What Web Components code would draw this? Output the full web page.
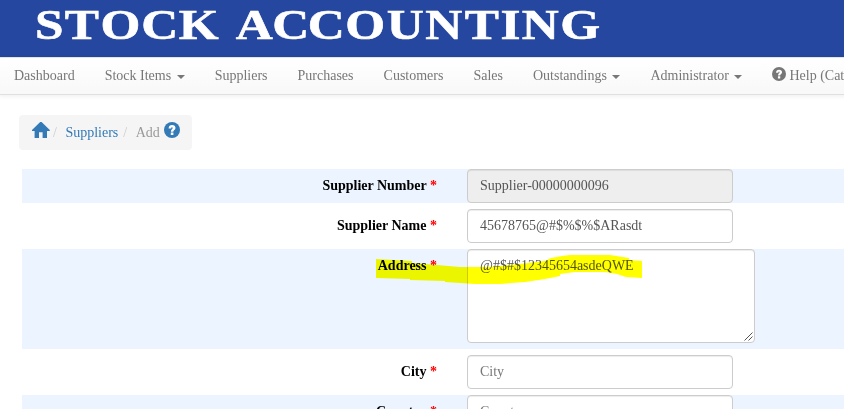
<!DOCTYPE html>
<html lang="en">
<head>
<meta charset="utf-8">
<title>Stock Accounting</title>
<style>
html,body{margin:0;height:409px;overflow:hidden;background:#fff}
body{font:14px/20px "Liberation Serif","Times New Roman",serif;color:#333}
</style>
</head>
<body>
<stock-page></stock-page>
<script>
const define=(name,html)=>customElements.define(name,class extends HTMLElement{
  connectedCallback(){
    if(this.shadowRoot)return;
    this.attachShadow({mode:'open'}).innerHTML=html;
  }
});

define('help-icon',`<style>:host{display:inline-block;line-height:0}svg{display:block;width:100%;height:100%}</style>
<svg viewBox="0 0 16 16"><circle cx="8" cy="8" r="8" fill="currentColor"/><path d="M4.6 6.5C4.6 4.1 6 3 8.1 3S11.5 4.2 11.5 6C11.5 8 9.3 8.2 9.3 9.7H6.9C6.8 7.3 8.7 7.3 8.7 6C8.7 4.9 7.2 5 7.2 6.5ZM6.8 10.6H9.4V13H6.8Z" fill="#fff"/></svg>`);

define('home-icon',`<style>:host{display:inline-block;width:18px;height:16px}svg{display:block}</style>
<svg width="18" height="16" viewBox="0 0 18 16"><path d="M8.2 0H9.6L17.8 8V9H15V16H10.6V10.2H7V16H2.6V9H0V8Z" fill="currentColor"/></svg>`);

define('site-banner',`<style>:host{display:block;height:57px;background:#25479f}svg{display:block}
text{font:bold 42px "Liberation Serif","Times New Roman",serif;fill:#fff;stroke:#fff;stroke-width:.6}</style>
<svg width="844" height="57"><text transform="scale(1.22 1)" y="39" x="28.6 53.1 82.3 115.7 146.6 180 193.3 223.1 252.2 282.9 317.1 348.6 381 410.2 427.7 459.3">STOCK ACCOUNTING</text></svg>`);

define('nav-item',`<style>:host{display:flex;align-items:center;padding:0 15px;color:#777;white-space:nowrap}
i{display:none;margin:1px 0 0 5.5px;border:4px solid transparent;border-top-color:currentColor;border-bottom:0}
:host([menu]) i{display:block}</style><span><slot></slot></span><i></i>`);

define('nav-bar',`<style>:host{display:flex;box-sizing:border-box;width:1100px;height:38px;margin-left:-1px;border-top:1px solid #e3e3e8;border-bottom:1px solid #e0e0e0;background:linear-gradient(#fff,#f8f8f8);box-shadow:0 1px 5px rgba(0,0,0,.075)}
help-icon{width:14px;height:14px;vertical-align:-1px;margin:0 3px 0 0}</style>
<nav-item>Dashboard</nav-item><nav-item menu>Stock Items</nav-item><nav-item>Suppliers</nav-item><nav-item>Purchases</nav-item><nav-item>Customers</nav-item><nav-item>Sales</nav-item><nav-item menu>Outstandings</nav-item><nav-item menu>Administrator</nav-item><nav-item><help-icon></help-icon>Help (Cat</nav-item>`);

define('bread-crumb',`<style>:host{display:flex;box-sizing:border-box;width:173px;height:35px;margin:20px 0 19px 19px;padding:7px 12px 0 13px;border-radius:4px;background:#f5f5f5;color:#999}
home-icon,a,help-icon{color:#337ab7}b{font-weight:400;color:#ccc}home-icon{margin-right:3px}
b,a,.add{padding-top:1px}
b+a{margin-left:8.5px}a+b{margin-left:5px}.add{margin-left:8.5px}help-icon{width:16px;height:16px;margin-left:4px}</style>
<home-icon></home-icon><b>/</b><a>Suppliers</a><b>/</b><span class="add">Add</span><help-icon></help-icon>`);

define('form-row',`<style>:host{display:grid;grid-template-columns:415px 288px;column-gap:30px;margin:0 0 6px 22px}
:host([band]){background:#ecf5ff}
:host([area]){padding-bottom:6px}
label{padding-top:7px;text-align:right;font-weight:700;color:#000}label .req{color:red}
.f{box-sizing:border-box;width:266px;height:34px;padding:6px 12px;border:1px solid #ccc;border-radius:4px;background:#fff;color:#555;box-shadow:inset 0 1px 1px rgba(0,0,0,.075);position:relative}
:host([readonly]) .f{background:#eee}:host([hint]) .f{color:#777}
:host([area]) .f{width:288px;height:94px}
svg{display:none;position:absolute;right:1px;bottom:1px}:host([area]) svg{display:block}</style>
<label><slot name="label"></slot> <span class="req">*</span></label><div class="f"><slot></slot><svg width="9" height="9"><path d="M0.5 8.5L8.5 0.5M4.5 8.5L8.5 4.5" stroke="#555" stroke-width="1"/></svg></div>`);

define('marker-stroke',`<style>:host{position:absolute;left:0;top:0;mix-blend-mode:multiply;pointer-events:none}svg{display:block}</style>
<svg width="844" height="409"><path d="M376 259L412 261V263L437 265L460 267H490L520 264L545 261L551 258L562 256L570 255H610L629 258V260L642 261V278L626 277L617 274L605 272H575L560 274V276L545 279L525 282L500 284H475L445 282V281L410 280V279L376 278Z" fill="#ff0"/></svg>`);

define('stock-page',`<style>:host{display:block;position:relative;width:844px;height:409px;overflow:hidden;background:#fff;isolation:isolate}</style>
<site-banner></site-banner><nav-bar></nav-bar><bread-crumb></bread-crumb>
<form-row band readonly><span slot="label">Supplier Number</span>Supplier-00000000096</form-row>
<form-row><span slot="label">Supplier Name</span>45678765@#$%$%$ARasdt</form-row>
<form-row band area><span slot="label">Address</span>@#$#$12345654asdeQWE</form-row>
<form-row hint><span slot="label">City</span>City</form-row>
<form-row band hint><span slot="label">Country</span>Country</form-row>
<marker-stroke></marker-stroke>`);
</script>
</body>
</html>
